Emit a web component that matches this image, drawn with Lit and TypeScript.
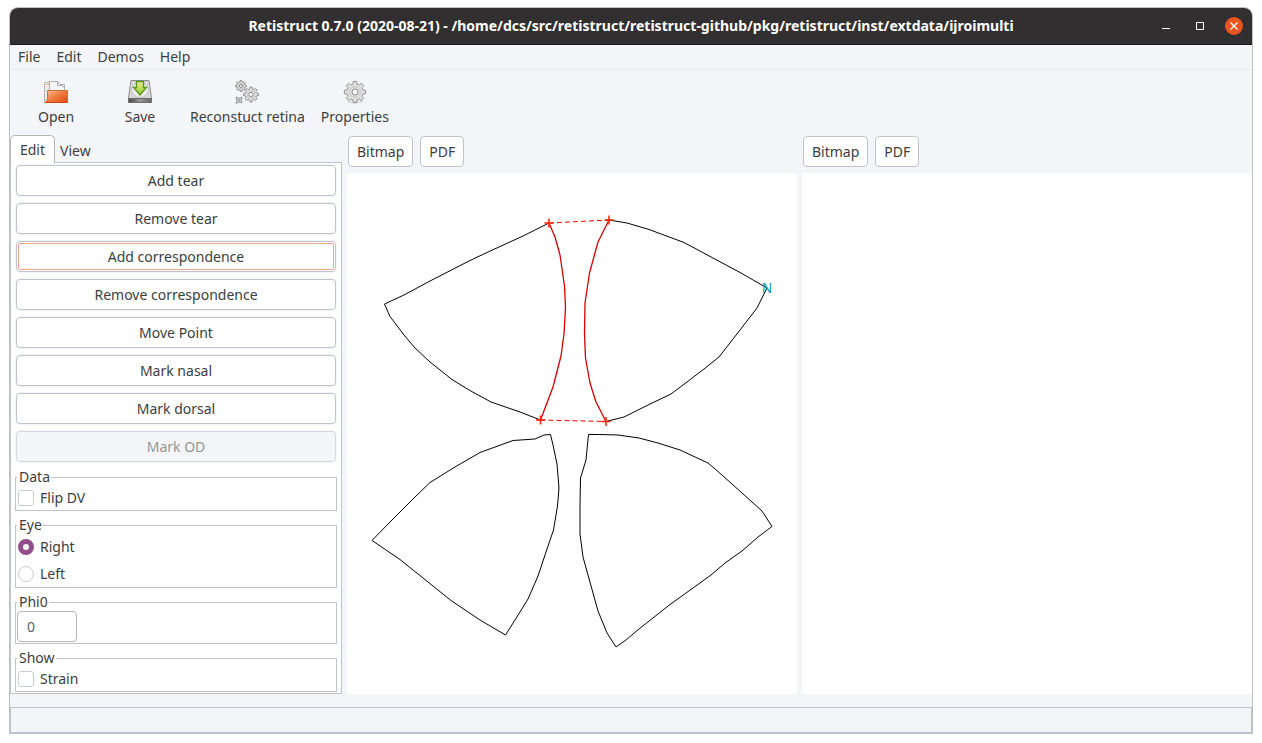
import { LitElement, css, html, svg } from "lit";
import { customElement, state } from "lit/decorators.js";

type Point = [number, number];

interface Piece {
  rim: Point[];
  tear?: Point[];
}

const pieces: Piece[] = [
  {
    rim: [[202, 50], [176, 63], [141, 79], [122, 88], [83, 108], [57, 122], [37.5, 131], [43, 143.5], [57, 162], [68, 175], [83, 189], [105, 206.5], [122, 217], [144, 229], [173, 239], [193.5, 247]],
    tear: [[202, 50], [208, 64], [213, 82], [217.5, 113], [218.5, 134], [217, 161], [214, 183], [206, 214], [193.5, 247]],
  },
  {
    rim: [[262, 47], [280, 50], [302, 56.5], [337, 69.5], [394, 100], [420, 115], [410, 135], [393, 157], [372, 184], [357, 196], [340, 209], [324, 221], [301, 232], [277, 244], [259, 248.5]],
    tear: [[262, 47], [251, 69], [242.5, 100], [238, 130], [237.5, 161], [238.5, 185], [243, 210], [249, 229], [259, 248.5]],
  },
  {
    rim: [[203.5, 261.5], [197, 262], [188, 266], [166, 267.5], [133, 279.5], [108, 294], [83, 309.5], [66, 326], [44, 348], [25, 367.5], [53, 386.5], [104, 427.5], [133, 447], [158.5, 462], [168, 447], [181, 426], [191, 403], [199, 379], [206.5, 357], [210.5, 333], [212, 315], [210, 291], [206, 272], [203.5, 261.5]],
  },
  {
    rim: [[241.5, 261.5], [252.5, 261.5], [271, 262], [292, 265], [311, 270], [333, 277], [361, 290], [371, 298.5], [385, 311], [415, 338], [425, 353.5], [411, 364], [395, 378], [378, 390], [364, 402], [323, 431.5], [292, 456], [279, 467], [269, 474], [260, 460], [251, 438], [236, 384], [233, 361], [233, 332], [233.5, 305], [239, 287], [241.5, 261.5]],
  },
];

const correspondences: [Point, Point][] = [
  [[202, 50], [262, 47]],
  [[193.5, 247], [259, 248.5]],
];

const toPoints = (list: Point[]) => list.map((p) => p.join(",")).join(" ");

const gearPath = (cx: number, cy: number, r: number, teeth: number) => {
  const out: string[] = [];
  const step = (Math.PI * 2) / teeth;
  const inner = r * 0.76;
  for (let i = 0; i < teeth; i++) {
    const a = i * step - Math.PI / 2;
    const corners: [number, number][] = [
      [inner, -0.3],
      [r, -0.2],
      [r, 0.2],
      [inner, 0.3],
    ];
    for (const [radius, part] of corners) {
      const t = a + part * step;
      out.push(`${(cx + radius * Math.cos(t)).toFixed(2)} ${(cy + radius * Math.sin(t)).toFixed(2)}`);
    }
  }
  return `M${out.join("L")}Z`;
};

const openIcon = html`<svg class="icon" viewBox="0 0 24 24" aria-hidden="true">
  <defs>
    <linearGradient id="folder" x1="0" y1="0" x2="1" y2="1">
      <stop offset="0" stop-color="#f5c09a" /><stop offset=".5" stop-color="#ee7a3c" /><stop offset="1" stop-color="#e4460f" />
    </linearGradient>
  </defs>
  <path d="M.5 22.5V2.500H5.500V22.500Z" fill="#ececec" stroke="#b4b4b4" />
  <path d="M2 4.500H6" stroke="#f0a860" />
  <path d="M5.500 14V1.500H13.500L16.500 4.500H20.500V14Z" fill="#f6f6f6" stroke="#b0b0b0" />
  <path d="M13.500 1.500V5.500H17.500ZM17 5L20.500 7.500" fill="#fff" stroke="#a8a8a8" />
  <path d="M3.500 10.500H23.500V22.500H1.500L3.500 19Z" fill="url(#folder)" stroke="#d9683a" />
  <path d="M1 22.500H23.500" stroke="#c9480f" />
</svg>`;

const saveIcon = html`<svg class="icon" viewBox="0 0 24 24" aria-hidden="true">
  <defs>
    <linearGradient id="disk" x1="0" y1="0" x2="1" y2="0">
      <stop offset="0" stop-color="#444" /><stop offset=".5" stop-color="#999" /><stop offset="1" stop-color="#666" />
    </linearGradient>
    <linearGradient id="arrow" x1="0" y1="0" x2="0" y2="1">
      <stop offset="0" stop-color="#e4ee9c" /><stop offset="1" stop-color="#97c924" />
    </linearGradient>
  </defs>
  <path d="M3 .5H21L23.500 18V22.500H.5V18Z" fill="#d8d8d8" stroke="#8c8c8c" />
  <ellipse cx="12" cy="10" rx="8.500" ry="7.500" fill="#ececec" stroke="#c0c0c0" />
  <path d="M.8 18.500H23.200V22.500H.8Z" fill="url(#disk)" stroke="#6c6c6c" />
  <path d="M8.500 1.500H15.500V7.500H18.500L12 15L5.500 7.500H8.500Z" fill="url(#arrow)" stroke="#5e9418" stroke-width="1.300" />
</svg>`;

const gearShape = (cx: number, cy: number, r: number, teeth: number) => svg`
  <path d=${gearPath(cx, cy, r, teeth)} fill="#e0e0e0" stroke="#929292" stroke-linejoin="round" />
  <circle cx=${cx} cy=${cy} r=${r * 0.5} fill="none" stroke="#c6c6c6" />
  <circle cx=${cx} cy=${cy} r=${r * 0.28} fill="#f8f8f8" stroke="#8e8e8e" />`;

const gearsIcon = html`<svg class="icon" viewBox="0 0 24 24" aria-hidden="true">
  ${gearShape(6, 6, 5.5, 8)} ${gearShape(16, 14.5, 7.5, 8)}
  <path d="M1 17L3 18H5L7 17V19L6.300 20V21L7 23L5 22.300H3L1 23.500L1.700 21V19.500Z" fill="#d4d4d4" stroke="#999" />
  <circle cx="4" cy="20" r="1" fill="#f4f4f4" stroke="#999" />
</svg>`;

const gearIcon = html`<svg class="icon" viewBox="0 0 24 24" aria-hidden="true">
  <ellipse cx="12" cy="22" rx="8" ry="1.500" fill="#dcdde0" />
  ${gearShape(12, 12, 10.8, 8)}
</svg>`;

const tools = [
  { label: "Open", icon: openIcon },
  { label: "Save", icon: saveIcon },
  { label: "Reconstuct retina", icon: gearsIcon },
  { label: "Properties", icon: gearIcon },
];

const controls = css`
  * {
    box-sizing: border-box;
  }
  button,
  input {
    font: inherit;
    color: inherit;
    margin: 0;
  }
  .push {
    height: 31px;
    padding: 0 8px;
    background: #fff;
    border: 1px solid #c0c3cb;
    border-radius: 4px;
    line-height: 20px;
  }
`;

@customElement("plot-pane")
export class PlotPane extends LitElement {
  static properties = { filled: { type: Boolean } };
  declare filled: boolean;

  static styles = [
    controls,
    css`
      :host {
        display: flex;
        flex-direction: column;
        flex: 1 1 0;
        min-width: 0;
      }
      .exports {
        display: flex;
        gap: 7px;
        padding: 1px 1px 6px;
      }
      .canvas {
        flex: 1;
        display: flex;
        background: #fff;
      }
      .plot {
        flex: 1;
        min-width: 0;
      }
      .nasal {
        font: 14px "Liberation Sans", Arial, sans-serif;
      }
    `,
  ];

  private cross([x, y]: Point) {
    return svg`<path d=${`M${x - 4.5} ${y}h9M${x} ${y - 4.5}v9`} stroke="#ff2000" stroke-width="1.5" />`;
  }

  private drawing() {
    return svg`
      <g fill="none" stroke-linejoin="round">
        ${pieces.map((p) => svg`<polyline points=${toPoints(p.rim)} stroke="#000" />`)}
        ${pieces.map((p) => (p.tear ? svg`<polyline points=${toPoints(p.tear)} stroke="#d80000" stroke-width="1.3" />` : ""))}
        ${correspondences.map(
          ([a, b]) => svg`<path d=${`M${a.join(" ")}L${b.join(" ")}`} stroke="#f00" stroke-dasharray="5 3" />
            ${this.cross(a)} ${this.cross(b)}`
        )}
      </g>
      <text class="nasal" x="420" y="120" text-anchor="middle" fill="#009ca4">N</text>`;
  }

  render() {
    return html`
      <div class="exports">
        <button class="push">Bitmap</button>
        <button class="push">PDF</button>
      </div>
      <div class="canvas">
        ${this.filled
          ? html`<svg class="plot" viewBox="0 0 450 521" role="img" aria-label="Retinal outline">${this.drawing()}</svg>`
          : ""}
      </div>
    `;
  }
}

@customElement("edit-panel")
export class EditPanel extends LitElement {
  static styles = [
    controls,
    css`
      :host {
        display: flex;
        flex-direction: column;
        flex: none;
        width: 332px;
      }
      .tabs {
        display: flex;
        height: 28px;
        margin-bottom: -1px;
        position: relative;
      }
      .tab {
        padding: 4px 4px 0;
        border: 1px solid transparent;
        background: none;
        line-height: 20px;
      }
      .tab.active {
        width: 45px;
        padding: 0;
        background: #fff;
        border-color: #b9b9b4;
        border-bottom: 0;
        border-radius: 5px 5px 0 0;
      }
      .page {
        flex: 1;
        padding: 2px 4px 1px;
        background: #fff;
        border: 1px solid #c0c3cb;
      }
      .actions {
        display: grid;
        gap: 7px;
        padding: 0 1px 7px;
      }
      .actions .push {
        box-shadow: 0 0 0 1px #f4f5f8;
      }
      .actions .push.current {
        outline: 1px solid #f3a68c;
        outline-offset: -3px;
      }
      .actions .push:disabled {
        background: #f4f5f8;
        border-color: #d5d7dc;
        color: #929595;
      }
      .groups {
        display: grid;
        gap: 6px;
      }
      .group {
        min-width: 0;
        margin: 0;
        padding: 0 1px;
        border: 1px solid #c0c3cb;
      }
      .caption {
        padding: 0 1px 0 2px;
        line-height: 16px;
      }
      .choice {
        display: flex;
        align-items: center;
        gap: 6px;
        height: 25px;
        padding-left: 1px;
      }
      .choice.roomy {
        height: 27px;
      }
      .mark {
        appearance: none;
        flex: none;
        width: 16px;
        height: 16px;
        background: #fff;
        border: 1px solid #c6cbd3;
        border-radius: 3px;
      }
      .mark[type="radio"] {
        border-radius: 50%;
      }
      .mark[type="radio"]:checked {
        border: 5px solid #924d8b;
        background: #fff;
      }
      .angle {
        display: block;
        width: 60px;
        height: 31px;
        margin: 1px 0;
        padding: 0 9px;
        background: #fff;
        border: 1px solid #b6b6b3;
        border-radius: 4px;
        color: #5c6163;
      }
    `,
  ];

  @state() private eye = "Right";

  private actions = ["Add tear", "Remove tear", "Add correspondence", "Remove correspondence", "Move Point", "Mark nasal", "Mark dorsal", "Mark OD"];

  render() {
    return html`
      <div class="tabs" role="tablist">
        <button class="tab active" role="tab" aria-selected="true">Edit</button>
        <button class="tab" role="tab" aria-selected="false">View</button>
      </div>
      <div class="page" role="tabpanel">
        <div class="actions">
          ${this.actions.map(
            (a) => html`<button class="push ${a === "Add correspondence" ? "current" : ""}" ?disabled=${a === "Mark OD"}>${a}</button>`
          )}
        </div>
        <div class="groups">
          <fieldset class="group">
            <legend class="caption">Data</legend>
            <label class="choice"><input class="mark" type="checkbox" />Flip DV</label>
          </fieldset>
          <fieldset class="group">
            <legend class="caption">Eye</legend>
            ${["Right", "Left"].map(
              (side) => html`<label class="choice roomy"
                ><input class="mark" type="radio" name="eye" .checked=${this.eye === side} @change=${() => (this.eye = side)} />${side}</label
              >`
            )}
          </fieldset>
          <fieldset class="group">
            <legend class="caption">Phi0</legend>
            <input class="angle" type="text" value="0" aria-label="Phi0" />
          </fieldset>
          <fieldset class="group">
            <legend class="caption">Show</legend>
            <label class="choice"><input class="mark" type="checkbox" />Strain</label>
          </fieldset>
        </div>
      </div>
    `;
  }
}

@customElement("app-root")
export class AppRoot extends LitElement {
  static styles = [
    controls,
    css`
      :host {
        box-sizing: border-box;
        display: flex;
        min-height: 100vh;
        padding: 7px 9px 9px;
        background: #fff;
        color: #3b3e40;
        font: 14px/20px "Noto Sans", "Open Sans", sans-serif;
      }
      .window {
        flex: 1;
        min-width: 0;
        display: flex;
        flex-direction: column;
        background: #f4f5f8;
        border: 1px solid #bfc0c2;
        border-radius: 9px 9px 0 0;
        overflow: hidden;
      }
      .titlebar {
        display: grid;
        grid-template-columns: 1fr auto 1fr;
        align-items: center;
        height: 37px;
        background: #322f30;
        border-bottom: 1px solid #1c1a1b;
        color: #fff;
      }
      .title {
        grid-column: 2;
        margin: 0;
        font-size: 14px;
        font-weight: 700;
        white-space: nowrap;
      }
      .frame-buttons {
        display: flex;
        justify-content: flex-end;
        gap: 16px;
        padding-right: 9px;
      }
      .frame-button {
        display: flex;
        width: 18px;
        height: 18px;
        padding: 0;
        border: 0;
        border-radius: 50%;
        background: none;
      }
      .frame-button.close {
        background: #e95420;
      }
      .glyph {
        width: 18px;
        height: 18px;
        fill: none;
        stroke: #fff;
      }
      .menus {
        display: flex;
        height: 25px;
        border-bottom: 1px solid #ebebed;
      }
      .menu {
        padding: 2px 8px;
        border: 0;
        background: none;
        line-height: 20px;
      }
      .tools {
        display: flex;
        height: 65px;
        padding: 0 4px;
      }
      .tool {
        display: flex;
        flex-direction: column;
        align-items: center;
        gap: 3px;
        min-width: 84px;
        padding: 10px 8px 0;
        border: 0;
        background: none;
        line-height: 20px;
      }
      .icon {
        width: 24px;
        height: 24px;
      }
      .work {
        flex: 1;
        display: flex;
        gap: 5px;
      }
      .status {
        height: 26px;
        margin-top: 13px;
        border: 1px solid #c0c3cb;
      }
    `,
  ];

  render() {
    return html`
      <div class="window">
        <header class="titlebar">
          <h1 class="title">Retistruct 0.7.0 (2020-08-21) - /home/dcs/src/retistruct/retistruct-github/pkg/retistruct/inst/extdata/ijroimulti</h1>
          <div class="frame-buttons">
            <button class="frame-button" aria-label="Minimize">
              <svg class="glyph" viewBox="0 0 18 18"><path d="M5 11.500h8" /></svg>
            </button>
            <button class="frame-button" aria-label="Maximize">
              <svg class="glyph" viewBox="0 0 18 18"><path d="M5.500 5.500h7v7h-7z" /></svg>
            </button>
            <button class="frame-button close" aria-label="Close">
              <svg class="glyph" viewBox="0 0 18 18"><path d="M5.500 5.500l7 7m0-7l-7 7" stroke-width="1.300" /></svg>
            </button>
          </div>
        </header>
        <nav class="menus">
          ${["File", "Edit", "Demos", "Help"].map((m) => html`<button class="menu">${m}</button>`)}
        </nav>
        <div class="tools" role="toolbar">
          ${tools.map((t) => html`<button class="tool">${t.icon}${t.label}</button>`)}
        </div>
        <main class="work">
          <edit-panel></edit-panel>
          <plot-pane filled></plot-pane>
          <plot-pane></plot-pane>
        </main>
        <footer class="status"></footer>
      </div>
    `;
  }
}
